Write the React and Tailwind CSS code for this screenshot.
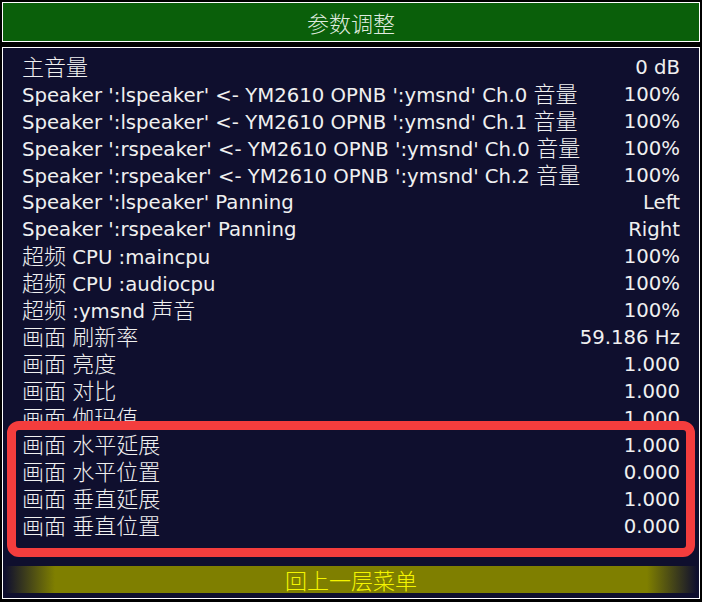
import React from "react";

const rows = [
  ["主音量", "0 dB"],
  ["Speaker ':lspeaker' <- YM2610 OPNB ':ymsnd' Ch.0 音量", "100%"],
  ["Speaker ':lspeaker' <- YM2610 OPNB ':ymsnd' Ch.1 音量", "100%"],
  ["Speaker ':rspeaker' <- YM2610 OPNB ':ymsnd' Ch.0 音量", "100%"],
  ["Speaker ':rspeaker' <- YM2610 OPNB ':ymsnd' Ch.2 音量", "100%"],
  ["Speaker ':lspeaker' Panning", "Left"],
  ["Speaker ':rspeaker' Panning", "Right"],
  ["超频 CPU :maincpu", "100%"],
  ["超频 CPU :audiocpu", "100%"],
  ["超频 :ymsnd 声音", "100%"],
  ["画面 刷新率", "59.186 Hz"],
  ["画面 亮度", "1.000"],
  ["画面 对比", "1.000"],
  ["画面 伽玛值", "1.000"],
  ["画面 水平延展", "1.000"],
  ["画面 水平位置", "0.000"],
  ["画面 垂直延展", "1.000"],
  ["画面 垂直位置", "0.000"],
];

function Mixed({ text }) {
  const parts = text.split(/([\u4e00-\u9fff]+)/);
  return (
    <span className="block h-[27px] leading-[27px]">
      {parts.map((p, i) =>
        /[\u4e00-\u9fff]/.test(p) ? (
          <span key={i} className="text-[22px] leading-none font-light font-['Noto_Sans_CJK_SC',sans-serif]">
            {p}
          </span>
        ) : (
          <span key={i}>{p}</span>
        )
      )}
    </span>
  );
}

export default function App() {
  return (
    <div className="relative w-[702px] h-[602px] bg-black overflow-hidden font-['DejaVu_Sans','Noto_Sans_CJK_SC',sans-serif] text-[19.7px] text-[#f0f0f0]">
      <div className="pt-[2px] px-[2px]">
        <div className="h-[40px] border border-white bg-[#0a5f0a] flex items-center justify-center text-[22px] font-light text-[#dfeadf] font-['Noto_Sans_CJK_SC',sans-serif]">
          参数调整
        </div>
        <div className="mt-[5px] h-[552px] border border-white bg-[#0f0f2e] pt-[6px] flex flex-col">
          {rows.map(([l, r], i) => (
            <div key={i} className="h-[27px] leading-[27px] flex justify-between pl-[19px] pr-[19px] whitespace-nowrap">
              <Mixed text={l} />
              <span>{r}</span>
            </div>
          ))}
          <div className="h-[26px]" />
          <div className="mx-[2px] h-[27px] leading-[27px] text-center text-[22px] font-light font-['Noto_Sans_CJK_SC',sans-serif] text-[#f5f500] bg-[linear-gradient(to_right,#0f0f2e_0px,#7f7f00_50px,#7f7f00_calc(100%-50px),#0f0f2e_100%)]">
            回上一层菜单
          </div>
        </div>
      </div>
      <div className="absolute left-[7px] top-[421px] w-[688px] h-[136px] border-[9px] border-[#f43d3d] rounded-[12px]" />
    </div>
  );
}
